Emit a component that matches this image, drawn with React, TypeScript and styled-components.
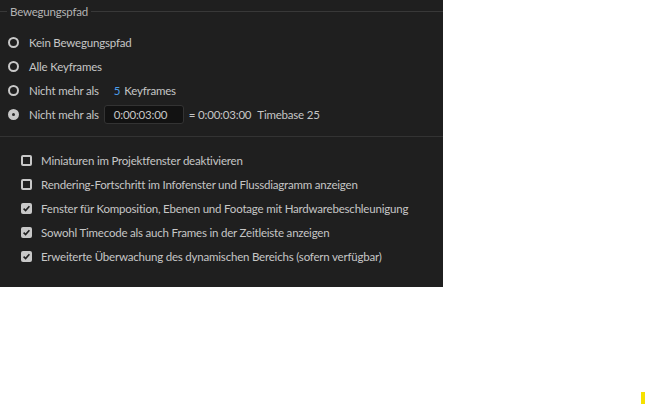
import React from 'react';
import styled, { createGlobalStyle } from 'styled-components';

const GlobalStyle = createGlobalStyle`
  html, body {
    margin: 0;
    padding: 0;
    background: #ffffff;
  }
`;

const Page = styled.div`
  position: relative;
  width: 646px;
  height: 405px;
`;

const Panel = styled.section`
  width: 443px;
  height: 287px;
  background: #1f1f1f;
  color: #c6c6c6;
  font-family: Lato, 'Open Sans', sans-serif;
  font-size: 11.5px;
  letter-spacing: -0.2px;
  box-sizing: border-box;
`;

const GroupHeader = styled.div`
  display: flex;
  align-items: center;
  height: 22px;
`;

const HeaderLine = styled.div<{ $grow?: boolean }>`
  height: 1px;
  background: #383838;
  width: 7px;
  flex: ${({ $grow }) => ($grow ? '1' : '0 0 7px')};
`;

const HeaderTitle = styled.span`
  padding: 0 3px;
  color: #b4b4b4;
`;

const RadioList = styled.div`
  display: flex;
  flex-direction: column;
  padding: 8px 0 0 8px;
`;

const OptionRow = styled.label`
  display: flex;
  align-items: center;
  height: 24px;
  white-space: nowrap;
`;

const Radio = styled.span<{ $checked?: boolean }>`
  width: 11px;
  height: 11px;
  box-sizing: border-box;
  border-radius: 50%;
  border: 2px solid #c8c8c8;
  background: ${({ $checked }) => ($checked ? '#c8c8c8' : '#1f1f1f')};
  margin-right: 10px;
  display: flex;
  align-items: center;
  justify-content: center;

  &::after {
    content: '';
    display: ${({ $checked }) => ($checked ? 'block' : 'none')};
    width: 3px;
    height: 3px;
    border-radius: 50%;
    background: #2a2a2a;
  }
`;

const Count = styled.span`
  color: #4b9ce8;
  margin: 0 4px 0 15px;
`;

const TimeInput = styled.span`
  display: inline-flex;
  align-items: center;
  box-sizing: border-box;
  width: 80px;
  height: 19px;
  margin-left: 5px;
  padding-left: 9px;
  background: #121212;
  border: 1px solid #333333;
  border-radius: 3px;
  color: #c6c6c6;
`;

const Equivalent = styled.span`
  margin-left: 5px;
`;

const Timebase = styled.span`
  margin-left: 6px;
`;

const Separator = styled.hr`
  border: none;
  height: 1px;
  background: #333333;
  margin: 10px 0 0;
`;

const CheckList = styled.div`
  display: flex;
  flex-direction: column;
  padding: 11px 0 0 21px;
`;

const Box = styled.span<{ $checked?: boolean }>`
  width: 11px;
  height: 11px;
  box-sizing: border-box;
  border-radius: 2px;
  border: ${({ $checked }) => ($checked ? 'none' : '2px solid #c8c8c8')};
  background: ${({ $checked }) => ($checked ? '#c8c8c8' : '#1f1f1f')};
  margin-right: 9px;
  display: flex;
  align-items: center;
  justify-content: center;
`;

const CheckMark = () => (
  <svg width="9" height="9" viewBox="0 0 9 9" aria-hidden="true">
    <path d="M1.6 4.6 L3.6 6.6 L7.4 2.2" fill="none" stroke="#1f1f1f" strokeWidth="1.6" />
  </svg>
);

const Marker = styled.div`
  position: absolute;
  left: 641px;
  top: 392px;
  width: 4px;
  height: 12px;
  background: #f6e100;
`;

const checks = [
  { label: 'Miniaturen im Projektfenster deaktivieren', checked: false },
  { label: 'Rendering-Fortschritt im Infofenster und Flussdiagramm anzeigen', checked: false },
  { label: 'Fenster für Komposition, Ebenen und Footage mit Hardwarebeschleunigung', checked: true },
  { label: 'Sowohl Timecode als auch Frames in der Zeitleiste anzeigen', checked: true },
  { label: 'Erweiterte Überwachung des dynamischen Bereichs (sofern verfügbar)', checked: true },
];

export default function App() {
  return (
    <Page>
      <GlobalStyle />
      <Panel>
        <GroupHeader>
          <HeaderLine />
          <HeaderTitle>Bewegungspfad</HeaderTitle>
          <HeaderLine $grow />
        </GroupHeader>

        <RadioList>
          <OptionRow>
            <Radio />
            Kein Bewegungspfad
          </OptionRow>
          <OptionRow>
            <Radio />
            Alle Keyframes
          </OptionRow>
          <OptionRow>
            <Radio />
            Nicht mehr als
            <Count>5</Count>
            Keyframes
          </OptionRow>
          <OptionRow>
            <Radio $checked />
            Nicht mehr als
            <TimeInput>0:00:03:00</TimeInput>
            <Equivalent>= 0:00:03:00</Equivalent>
            <Timebase>Timebase 25</Timebase>
          </OptionRow>
        </RadioList>

        <Separator />

        <CheckList>
          {checks.map((c) => (
            <OptionRow key={c.label}>
              <Box $checked={c.checked}>{c.checked && <CheckMark />}</Box>
              {c.label}
            </OptionRow>
          ))}
        </CheckList>
      </Panel>
      <Marker />
    </Page>
  );
}
